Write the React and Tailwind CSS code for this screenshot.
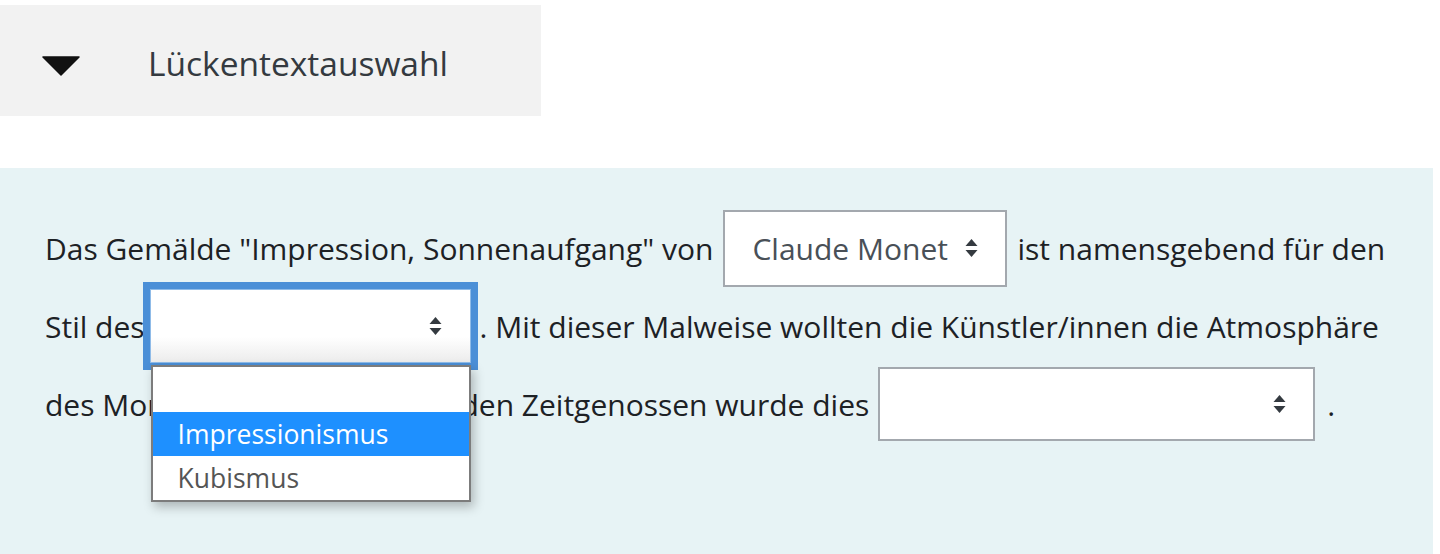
import React from "react";

function UpDown({ className = "" }) {
  return (
    <svg width="13" height="20" viewBox="0 0 13 20" className={className} aria-hidden="true">
      <path d="M6.5 1 L12.5 8 L0.5 8 Z" fill="#343a40" />
      <path d="M0.5 12 L12.5 12 L6.5 19 Z" fill="#343a40" />
    </svg>
  );
}

export default function App() {
  const font = { fontFamily: '"Open Sans", "Noto Sans", sans-serif' };
  return (
    <div className="w-[1440px] h-[554px] bg-white overflow-hidden" style={font}>
      {/* Header */}
      <div className="pt-[5px]">
        <div className="w-[541px] h-[111px] bg-[#f2f2f2] flex items-center">
          <svg width="38" height="20" viewBox="0 0 38 20" className="ml-[42px] mt-[10px]" aria-hidden="true">
            <path d="M1 1 L37 1 L19 19 Z" fill="#111" stroke="#111" strokeWidth="1.5" strokeLinejoin="round" />
          </svg>
          <span className="ml-[68px] text-[33.5px] leading-none text-[#343a40] mt-[6px]">Lückentextauswahl</span>
        </div>
      </div>

      {/* Question panel */}
      <div className="mt-[52px] w-[1433px] h-[386px] bg-[#e7f3f5] text-[30px] text-[#1d2125]">
        <div className="pt-[41px] pl-[45px] flex flex-col">
          {/* Row 1 */}
          <div className="h-[78px] flex items-center whitespace-nowrap">
            <span>Das Gemälde "Impression, Sonnenaufgang" von</span>
            <div className="ml-[10px] mr-[10px] w-[284px] h-[77px] bg-white border-2 border-[#a3a8ae] flex items-center justify-between pl-[27px] pr-[27px]">
              <span className="text-[#495057]">Claude Monet</span>
              <UpDown />
            </div>
            <span>ist namensgebend für den</span>
          </div>

          {/* Row 2 */}
          <div className="h-[78px] flex items-center whitespace-nowrap">
            <span>Stil des</span>
            <div className="relative w-[335px] h-[88px] -ml-[2px] bg-[#4b8fd7] p-[7px]">
              <div className="w-full h-full border border-[#8fbbe8] bg-[linear-gradient(to_bottom,#ffffff_65%,#ececec)] flex items-center justify-end pr-[28px]">
                <UpDown />
              </div>
              {/* Open dropdown list */}
              <div className="absolute left-[8px] top-[83px] w-[320px] bg-white border-2 border-[#7c7c7c] shadow-[3px_5px_10px_rgba(0,0,0,0.25)] z-10 text-[26.5px] leading-none">
                <div className="h-[45px]"></div>
                <div className="h-[44px] bg-[#1e90ff] text-white flex items-center pl-[25px]">Impressionismus</div>
                <div className="h-[44px] text-[#555] flex items-center pl-[25px]">Kubismus</div>
              </div>
            </div>
            <span className="ml-[2px]">. Mit dieser Malweise wollten die Künstler/innen die Atmosphäre</span>
          </div>

          {/* Row 3 */}
          <div className="h-[78px] flex items-center whitespace-nowrap">
            <span>des Moments einfangen. Von den Zeitgenossen wurde dies</span>
            <div className="ml-[9px] w-[437px] h-[74px] bg-white border-2 border-[#a3a8ae] flex items-center justify-end pr-[27px]">
              <UpDown />
            </div>
            <span className="ml-[12px]">.</span>
          </div>
        </div>
      </div>
    </div>
  );
}
